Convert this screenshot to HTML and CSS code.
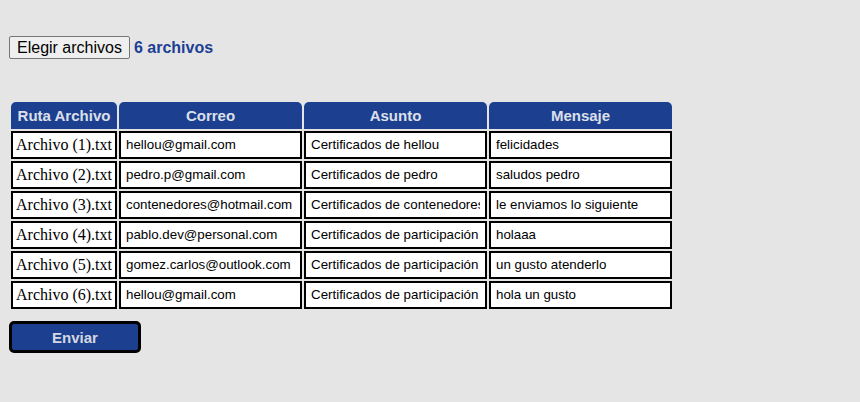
FILE: index.html
```html
<!DOCTYPE html>
<html lang="es">
<head>
<meta charset="utf-8">
<title>Envío de certificados</title>
<link rel="stylesheet" href="styles.css">
</head>
<body>
<div class="upload">
  <span class="file-btn">Elegir archivos</span>
  <span class="file-count">6 archivos</span>
</div>
<table class="data">
  <colgroup>
    <col class="c1"><col class="c2"><col class="c3"><col class="c4">
  </colgroup>
  <thead>
    <tr><th>Ruta Archivo</th><th>Correo</th><th>Asunto</th><th>Mensaje</th></tr>
  </thead>
  <tbody>
    <tr><td class="path">Archivo (1).txt</td><td><div class="field">hellou@gmail.com</div></td><td><div class="field">Certificados de hellou</div></td><td><div class="field">felicidades</div></td></tr>
    <tr><td class="path">Archivo (2).txt</td><td><div class="field">pedro.p@gmail.com</div></td><td><div class="field">Certificados de pedro</div></td><td><div class="field">saludos pedro</div></td></tr>
    <tr><td class="path">Archivo (3).txt</td><td><div class="field">contenedores@hotmail.com</div></td><td><div class="field">Certificados de contenedores</div></td><td><div class="field">le enviamos lo siguiente</div></td></tr>
    <tr><td class="path">Archivo (4).txt</td><td><div class="field">pablo.dev@personal.com</div></td><td><div class="field">Certificados de participación</div></td><td><div class="field">holaaa</div></td></tr>
    <tr><td class="path">Archivo (5).txt</td><td><div class="field">gomez.carlos@outlook.com</div></td><td><div class="field">Certificados de participación</div></td><td><div class="field">un gusto atenderlo</div></td></tr>
    <tr><td class="path">Archivo (6).txt</td><td><div class="field">hellou@gmail.com</div></td><td><div class="field">Certificados de participación</div></td><td><div class="field">hola un gusto</div></td></tr>
  </tbody>
</table>
<button class="send" type="button">Enviar</button>
</body>
</html>
```

FILE: styles.css
```css
html, body {
  background: #e5e5e5;
}
body {
  margin: 8px;
  font-family: "Liberation Serif", serif;
}
.upload {
  margin: 28px 0 0 1px;
  display: flex;
  align-items: center;
  gap: 4px;
  height: 23px;
}
.file-btn {
  box-sizing: border-box;
  height: 23px;
  line-height: 21px;
  padding: 0 7px;
  background: #efefef;
  border: 1px solid #767676;
  border-radius: 2px;
  font-family: "Liberation Sans", Arial, sans-serif;
  font-size: 16px;
  color: #000;
}
.file-count {
  font-family: "Liberation Sans", Arial, sans-serif;
  font-weight: bold;
  font-size: 16px;
  color: #1c3f94;
}
.data {
  margin: 41px 0 0 1px;
  border-collapse: separate;
  border-spacing: 2px;
  table-layout: fixed;
  width: 665px;
}
.c1 { width: 106px; }
.c2, .c3, .c4 { width: 183px; }
.data th {
  height: 27px;
  padding: 0;
  background: #1c3f8f;
  color: #dde0ea;
  font-family: "Liberation Sans", Arial, sans-serif;
  font-weight: bold;
  font-size: 15px;
  border-radius: 5px 5px 0 0;
  text-align: center;
  vertical-align: middle;
}
.data td {
  box-sizing: border-box;
  height: 28px;
  padding: 0 5px;
  background: #fff;
  border: 2px solid #000;
  overflow: hidden;
  white-space: nowrap;
  vertical-align: middle;
}
.data td.path {
  padding: 0 0 0 3px;
  font-family: "Liberation Serif", "Times New Roman", serif;
  font-size: 16px;
  color: #000;
}
.field {
  overflow: hidden;
  white-space: nowrap;
  font-family: "Liberation Sans", Arial, sans-serif;
  font-size: 13.33px;
  line-height: 24px;
  color: #000;
}
.send {
  display: block;
  box-sizing: border-box;
  margin: 10px 0 0 1px;
  width: 132px;
  height: 32px;
  background: #1c3f8f;
  border: 3px solid #000;
  border-radius: 5px;
  color: #d6d8e2;
  font-family: "Liberation Sans", Arial, sans-serif;
  font-weight: bold;
  font-size: 15px;
  padding: 0;
}
```
